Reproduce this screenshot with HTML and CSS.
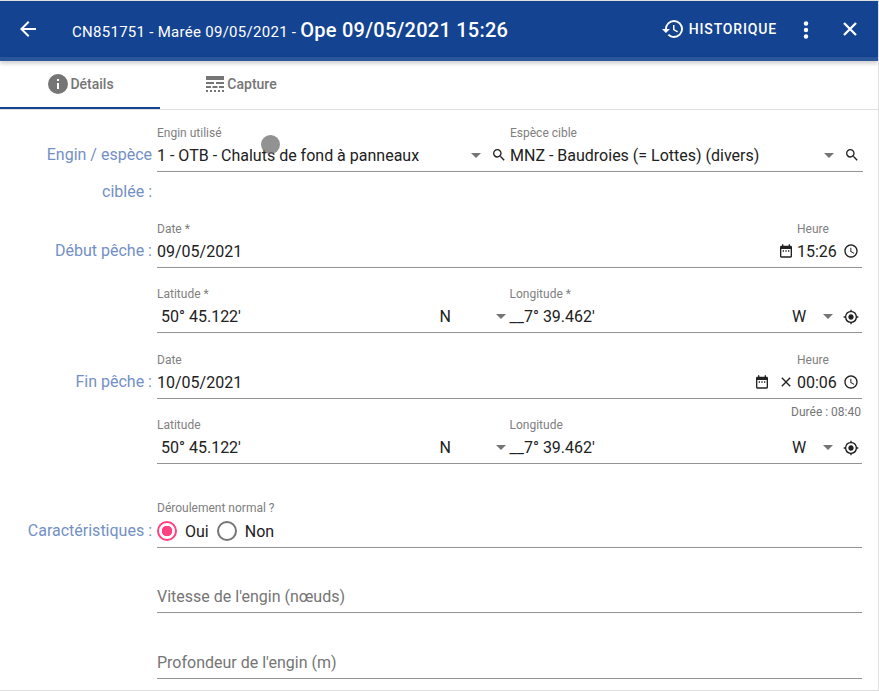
FILE: index.html
```html
<!DOCTYPE html>
<html lang="fr">
<head>
<meta charset="utf-8">
<title>Ope 09/05/2021 15:26</title>
<link rel="stylesheet" href="styles.css">
</head>
<body>
<svg class="defs" width="0" height="0">
  <symbol id="search" viewBox="0 0 24 24"><path d="M15.5 14h-.79l-.28-.27A6.47 6.47 0 0 0 16 9.5 6.5 6.5 0 1 0 9.5 16c1.61 0 3.09-.59 4.23-1.57l.27.28v.79l5 4.99L20.49 19l-4.99-5zm-6 0C7.01 14 5 11.99 5 9.5S7.01 5 9.5 5 14 7.01 14 9.5 11.99 14 9.5 14z"/></symbol>
  <symbol id="calendar" viewBox="0 0 24 24"><path d="M9 11H7v2h2v-2zm4 0h-2v2h2v-2zm4 0h-2v2h2v-2zm2-7h-1V2h-2v2H8V2H6v2H5c-1.11 0-2 .9-2 2v14c0 1.1.89 2 2 2h14c1.1 0 2-.9 2-2V6c0-1.1-.9-2-2-2zm0 16H5V9h14v11z"/></symbol>
  <symbol id="clock" viewBox="0 0 24 24"><path d="M11.99 2C6.47 2 2 6.48 2 12s4.47 10 9.99 10C17.52 22 22 17.52 22 12S17.52 2 11.99 2zM12 20c-4.42 0-8-3.58-8-8s3.58-8 8-8 8 3.58 8 8-3.58 8-8 8zm.5-13H11v6l5.25 3.15.75-1.23-4.5-2.67z"/></symbol>
  <symbol id="target" viewBox="0 0 24 24"><path d="M12 8c-2.21 0-4 1.79-4 4s1.79 4 4 4 4-1.79 4-4-1.79-4-4-4zm8.94 3A8.994 8.994 0 0 0 13 3.06V1h-2v2.06A8.994 8.994 0 0 0 3.06 11H1v2h2.06A8.994 8.994 0 0 0 11 20.94V23h2v-2.06A8.994 8.994 0 0 0 20.94 13H23v-2h-2.06zM12 19c-3.87 0-7-3.13-7-7s3.13-7 7-7 7 3.13 7 7-3.13 7-7 7z"/></symbol>
  <symbol id="close" viewBox="0 0 24 24"><path d="M19 6.41L17.59 5 12 10.59 6.41 5 5 6.41 10.59 12 5 17.59 6.41 19 12 13.41 17.59 19 19 17.59 13.41 12z"/></symbol>
</svg>
<div class="app">
  <header class="toolbar">
    <svg class="back" viewBox="0 0 24 24"><path d="M20 11H7.83l5.59-5.59L12 4l-8 8 8 8 1.41-1.41L7.83 13H20v-2z"/></svg>
    <h1 class="title"><span class="trip">CN851751 - Marée 09/05/2021 - </span><span class="ope">Ope 09/05/2021 15:26</span></h1>
    <button class="history">
      <svg viewBox="0 0 24 24"><path d="M13 3a9 9 0 0 0-9 9H1l3.89 3.89.07.14L9 12H6c0-3.87 3.13-7 7-7s7 3.13 7 7-3.13 7-7 7c-1.93 0-3.68-.79-4.94-2.06l-1.42 1.42A8.954 8.954 0 0 0 13 21a9 9 0 0 0 0-18zm-1 5v5l4.28 2.54.72-1.21-3.5-2.08V8H12z"/></svg>
      <span>HISTORIQUE</span>
    </button>
    <svg class="more" viewBox="0 0 24 24"><circle cx="12" cy="5.5" r="2.2"/><circle cx="12" cy="12" r="2.2"/><circle cx="12" cy="18.5" r="2.2"/></svg>
    <svg class="exit" viewBox="0 0 24 24"><path d="M6 6l12 12M18 6L6 18"/></svg>
  </header>
  <div class="progress"></div>
  <nav class="tabs">
    <a class="tab active"><svg viewBox="0 0 24 24"><path d="M12 2a10 10 0 1 0 0 20 10 10 0 0 0 0-20zm1 15h-2v-6h2v6zm0-8h-2V7h2v2z"/></svg><span>Détails</span></a>
    <a class="tab"><svg class="lines" viewBox="0 0 24 24"><path d="M3 16h5v-2H3v2zm6.500 0h5v-2h-5v2zm6.500 0h5v-2h-5v2zM3 20h2v-2H3v2zm4 0h2v-2H7v2zm4 0h2v-2h-2v2zm4 0h2v-2h-2v2zm4 0h2v-2h-2v2zM3 12h8v-2H3v2zm10 0h8v-2h-8v2zM3 4v4h18V4H3z"/></svg><span>Capture</span></a>
  </nav>
  <main class="form">
    <section class="row tall">
      <div class="caption">Engin / espèce ciblée :</div>
      <div class="fields wide">
        <div class="field grow"><label>Engin utilisé</label><div class="value"><span>1 - OTB - Chaluts de fond à panneaux</span><i class="arrow"></i><svg class="icon flush"><use href="#search"/></svg></div></div>
        <div class="field grow"><label>Espèce cible</label><div class="value"><span>MNZ - Baudroies (= Lottes) (divers)</span><i class="arrow"></i><svg class="icon"><use href="#search"/></svg></div></div>
      </div>
      <div class="touch"></div>
    </section>
    <section class="row">
      <div class="caption">Début pêche :</div>
      <div class="fields">
        <div class="field grow"><label>Date *</label><div class="value"><span>09/05/2021</span><svg class="icon flush"><use href="#calendar"/></svg></div></div>
        <div class="field time"><label>Heure</label><div class="value"><span>15:26</span><svg class="icon"><use href="#clock"/></svg></div></div>
      </div>
    </section>
    <section class="row plus">
      <div class="caption"></div>
      <div class="fields">
        <div class="field grow"><label>Latitude *</label><div class="value"><span class="inset">50° 45.122'</span></div></div>
        <div class="field side"><div class="value"><span>N</span><i class="arrow flush"></i></div></div>
        <div class="field grow"><label>Longitude *</label><div class="value"><span>__7° 39.462'</span></div></div>
        <div class="field side"><div class="value"><span>W</span><i class="arrow"></i><svg class="icon low"><use href="#target"/></svg></div></div>
      </div>
    </section>
    <section class="row">
      <div class="caption">Fin pêche :</div>
      <div class="fields">
        <div class="field grow"><label>Date</label><div class="value"><span>10/05/2021</span><svg class="icon spaced"><use href="#calendar"/></svg><svg class="icon flush"><use href="#close"/></svg></div></div>
        <div class="field time"><label>Heure</label><div class="value"><span>00:06</span><svg class="icon"><use href="#clock"/></svg></div></div>
      </div>
      <div class="hint">Durée : 08:40</div>
    </section>
    <section class="row last-position">
      <div class="caption"></div>
      <div class="fields">
        <div class="field grow"><label>Latitude</label><div class="value"><span class="inset">50° 45.122'</span></div></div>
        <div class="field side"><div class="value"><span>N</span><i class="arrow flush"></i></div></div>
        <div class="field grow"><label>Longitude</label><div class="value"><span>__7° 39.462'</span></div></div>
        <div class="field side"><div class="value"><span>W</span><i class="arrow"></i><svg class="icon low"><use href="#target"/></svg></div></div>
      </div>
    </section>
    <section class="row radios">
      <div class="caption">Caractéristiques :</div>
      <div class="fields">
        <div class="field grow"><label>Déroulement normal ?</label><div class="value"><i class="radio on"></i><span class="choice">Oui</span><i class="radio"></i><span class="choice">Non</span></div></div>
      </div>
    </section>
    <section class="row plus">
      <div class="caption"></div>
      <div class="fields"><div class="field grow"><div class="value empty"><span>Vitesse de l'engin (nœuds)</span></div></div></div>
    </section>
    <section class="row">
      <div class="caption"></div>
      <div class="fields"><div class="field grow"><div class="value empty"><span>Profondeur de l'engin (m)</span></div></div></div>
    </section>
  </main>
</div>
</body>
</html>
```
FILE: styles.css
```css
* { box-sizing: border-box; }
body { margin: 0; background: #fff; font-family: Roboto, sans-serif; color: #212121; }
svg { display: block; flex: none; fill: currentColor; }
.defs { position: absolute; }
.app { width: 879px; height: 691px; overflow: hidden; border: solid #dedede; border-width: 1px 1px 1px 0; }

.toolbar { display: flex; align-items: center; height: 56px; padding: 0 16px; background: #144391; color: #fff; }
.back { width: 24px; height: 24px; }
.title { flex: 1; margin: 0 0 0 32px; white-space: pre; font-weight: 400; line-height: 24px; }
.trip { font-size: 15px; letter-spacing: .28px; }
.ope { font-size: 20px; font-weight: 500; letter-spacing: .25px; }
.history { display: flex; align-items: center; gap: 4px; padding: 0; border: 0; background: none; color: inherit; font: 500 14px Roboto, sans-serif; letter-spacing: .84px; }
.history svg { width: 24px; height: 24px; }
.more { width: 24px; height: 24px; margin: 2px 0 0 17px; }
.exit { width: 24px; height: 24px; margin-left: 20px; stroke: #fff; stroke-width: 2.3; margin-right: 0; }
.progress { height: 4px; background: #2c569c; box-shadow: 0 2px 4px rgba(0,0,0,.25); }

.tabs { display: flex; height: 49px; border-bottom: 1px solid #e0e0e0; }
.tab { display: flex; align-items: center; justify-content: center; width: 160px; height: 48px; padding-right: 0; border-bottom: 2px solid transparent; font-size: 14px; font-weight: 500; color: #757575; }
.tab.active { border-color: #144391; }
.tab svg { width: 24px; height: 24px; }

.form { padding: 15px 16px 0 0; }
.row { position: relative; display: grid; grid-template-columns: 152px 705px; column-gap: 5px; height: 65px; align-content: start; }
.row.tall { height: 96px; grid-template-rows: 47px; }
.row.plus { height: 66px; }
.row.last-position { height: 84px; }
.caption { padding: 11px 0 0 20px; line-height: 37px; font-size: 16px; text-align: right; color: #7390c6; }
.fields { display: flex; height: 47px; }
.fields.wide { width: 706px; }
.field { display: flex; flex-direction: column; justify-content: flex-end; height: 47px; padding-bottom: 4px; border-bottom: 1px solid #949494; }
.grow { flex: 1 1 0; min-width: 0; }
.time { width: 65px; }
.side { width: 70px; }
.field label { height: 18px; font-size: 12px; line-height: 16px; color: #808080; }
.value { display: flex; align-items: center; height: 24px; font-size: 16px; white-space: nowrap; }
.value span:first-child { flex: 1; }
.value .inset { padding-left: 4px; }
.icon { width: 16px; height: 16px; margin-right: 3px; }
.icon.flush { margin-right: 3px; }
.icon.spaced { margin-right: 8px; }
.icon.low { position: relative; top: 1px; }
.arrow { border: 5px solid transparent; border-top-color: #757575; border-bottom: 0; margin-right: 10px; }
.arrow.flush { margin-right: 4px; }
.empty { color: #757575; }
.hint { grid-column: 2; margin-top: 6px; font-size: 12px; line-height: 12px; text-align: right; padding-right: 1px; color: #757575; }

.radios .field label { height: 17px; line-height: 12px; }
.radio { width: 20px; height: 20px; border: 2px solid #757575; border-radius: 50%; }
.radio.on { border-color: #ff4081; background: radial-gradient(circle, #ff4081 5px, transparent 5.5px); }
.choice { margin: 0 8px; }

.touch { position: absolute; left: 261px; top: 10px; width: 19px; height: 19px; border-radius: 50%; background: rgba(110,110,110,.75); }
```
